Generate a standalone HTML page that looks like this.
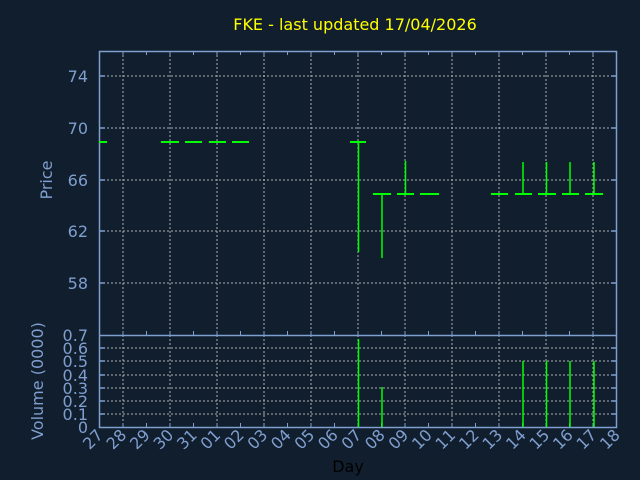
<!DOCTYPE html>
<html><head><meta charset="utf-8"><style>
html,body{margin:0;padding:0;background:#111e2e;}
svg{display:block;font-family:"DejaVu Sans","Liberation Sans",sans-serif;}
</style></head><body>
<svg width="640" height="480" viewBox="0 0 640 480" xmlns="http://www.w3.org/2000/svg">
<rect width="640" height="480" fill="#111e2e"/>
<text x="355" y="30" fill="#ffff00" font-size="16" text-anchor="middle">FKE - last updated 17/04/2026</text>
<g stroke="#c8c8c8" stroke-width="1" stroke-dasharray="2,2" opacity="0.85">
<path d="M99 76H617M99 128H617M99 180H617M99 231H617M99 283H617"/>
<path d="M99 348H617M99 361H617M99 375H617M99 388H617M99 401H617M99 414H617"/>
<path d="M123 51V427M170 51V427M217 51V427M264 51V427M311 51V427M358 51V427M405 51V427M452 51V427M499 51V427M546 51V427M593 51V427"/>
</g>
<g stroke="#7f9fcf" stroke-width="1.5" fill="none">
<rect x="99.5" y="51.5" width="517" height="376"/>
<path d="M99 335.5H617"/>
<path d="M99 76H105M99 128H105M99 180H105M99 231H105M99 283H105M611 76H617M611 128H617M611 180H617M611 231H617M611 283H617"/>
<path d="M99 348H105M99 361H105M99 375H105M99 388H105M99 401H105M99 414H105M611 348H617M611 361H617M611 375H617M611 388H617M611 401H617M611 414H617"/>
</g>
<g stroke="#7f9fcf" stroke-width="1">
<path d="M123 51V55M146.5 51V55M170 51V55M193.5 51V55M217 51V55M240.5 51V55M264 51V55M287.5 51V55M311 51V55M334.5 51V55M358 51V55M381.5 51V55M405 51V55M428.5 51V55M452 51V55M475.5 51V55M499 51V55M522.5 51V55M546 51V55M569.5 51V55M593 51V55"/>
<path d="M123 335V331M146.5 335V331M170 335V331M193.5 335V331M217 335V331M240.5 335V331M264 335V331M287.5 335V331M311 335V331M334.5 335V331M358 335V331M381.5 335V331M405 335V331M428.5 335V331M452 335V331M475.5 335V331M499 335V331M522.5 335V331M546 335V331M569.5 335V331M593 335V331"/>
<path d="M123 427V423M146.5 427V423M170 427V423M193.5 427V423M217 427V423M240.5 427V423M264 427V423M287.5 427V423M311 427V423M334.5 427V423M358 427V423M381.5 427V423M405 427V423M428.5 427V423M452 427V423M475.5 427V423M499 427V423M522.5 427V423M546 427V423M569.5 427V423M593 427V423"/>
</g>
<g fill="#7f9fcf" font-size="16" text-anchor="end">
<text x="88" y="82">74</text><text x="88" y="134">70</text><text x="88" y="186">66</text><text x="88" y="237">62</text><text x="88" y="289">58</text>
<text x="88" y="341">0.7</text><text x="88" y="354">0.6</text><text x="88" y="367">0.5</text><text x="88" y="381">0.4</text><text x="88" y="394">0.3</text><text x="88" y="407">0.2</text><text x="88" y="420">0.1</text><text x="88" y="433">0</text>
</g>
<text transform="translate(52,180) rotate(-90)" fill="#7f9fcf" font-size="16" text-anchor="middle">Price</text>
<text transform="translate(43,381) rotate(-90)" fill="#7f9fcf" font-size="16" text-anchor="middle">Volume (0000)</text>
<text x="348" y="472" fill="#000" font-size="16" text-anchor="middle">Day</text>
<g fill="#7f9fcf" font-size="16" text-anchor="end">
<text transform="translate(104,436) rotate(-45)">27</text>
<text transform="translate(127.5,436) rotate(-45)">28</text>
<text transform="translate(151,436) rotate(-45)">29</text>
<text transform="translate(174.5,436) rotate(-45)">30</text>
<text transform="translate(198,436) rotate(-45)">31</text>
<text transform="translate(221.5,436) rotate(-45)">01</text>
<text transform="translate(245,436) rotate(-45)">02</text>
<text transform="translate(268.5,436) rotate(-45)">03</text>
<text transform="translate(292,436) rotate(-45)">04</text>
<text transform="translate(315.5,436) rotate(-45)">05</text>
<text transform="translate(339,436) rotate(-45)">06</text>
<text transform="translate(362.5,436) rotate(-45)">07</text>
<text transform="translate(386,436) rotate(-45)">08</text>
<text transform="translate(409.5,436) rotate(-45)">09</text>
<text transform="translate(433,436) rotate(-45)">10</text>
<text transform="translate(456.5,436) rotate(-45)">11</text>
<text transform="translate(480,436) rotate(-45)">12</text>
<text transform="translate(503.5,436) rotate(-45)">13</text>
<text transform="translate(527,436) rotate(-45)">14</text>
<text transform="translate(550.5,436) rotate(-45)">15</text>
<text transform="translate(574,436) rotate(-45)">16</text>
<text transform="translate(597.5,436) rotate(-45)">17</text>
<text transform="translate(621,436) rotate(-45)">18</text>
</g>
<g stroke="#00ff00" fill="none">
<g stroke-width="2">
<path d="M99 142H107"/>
<path d="M161 142H179M185 142H202M209 142H226M232 142H249"/>
<path d="M350 142H366"/>
<path d="M373 194H391M397 194H414M420 194H439"/>
<path d="M491 194H508M515 194H532M538 194H556M562 194H579M585 194H603"/>
</g>
<g stroke-width="1.5">
<path d="M358.5 142V252M382 194V258M405.5 161V194M523 162V194M546.5 162V194M570 162V194M594 162V194"/>
<path d="M358.5 339V427M382 387V427M523 361V427M546.5 361V427M570 361V427M594 361V427"/>
</g>
</g>
</svg>
</body></html>
